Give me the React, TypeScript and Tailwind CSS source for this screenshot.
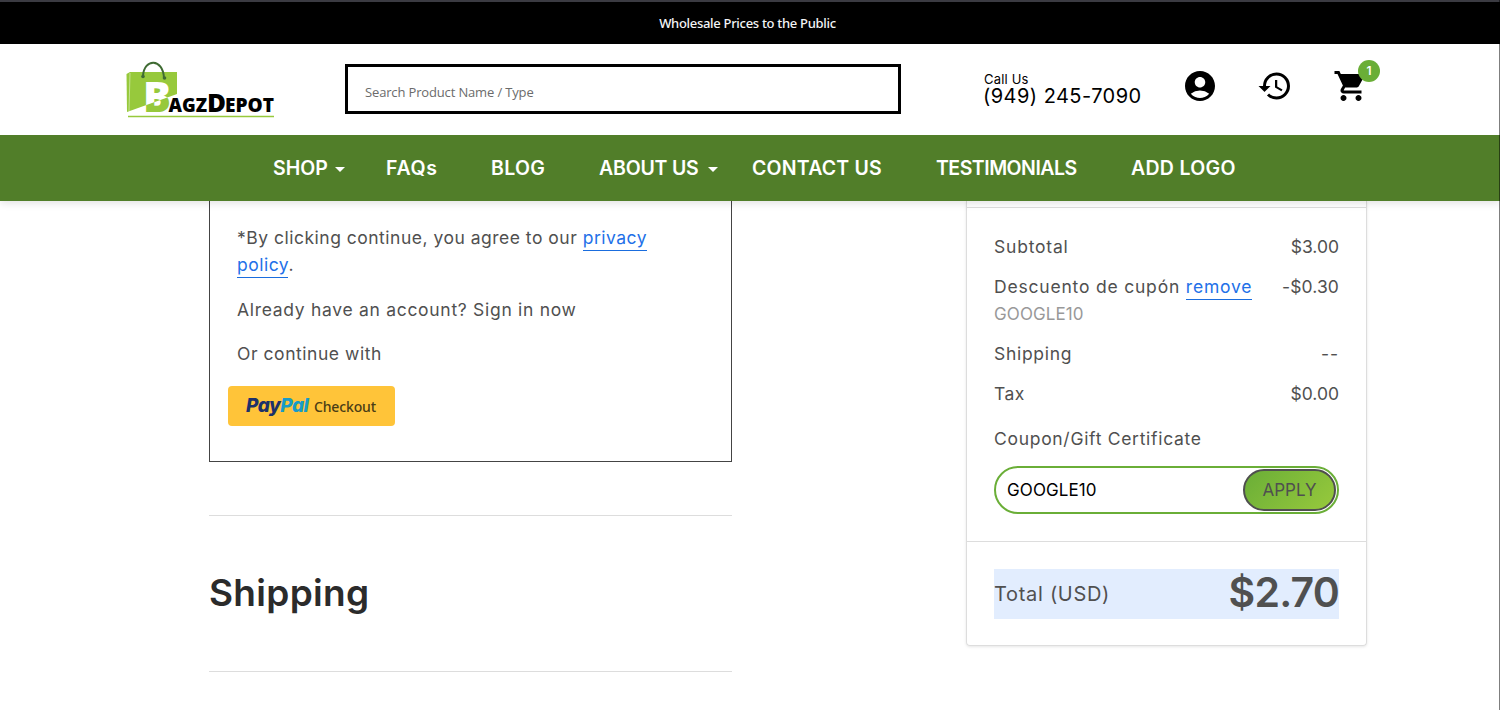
import React, { useState } from 'react';
import { MdAccountCircle, MdHistory, MdShoppingCart } from 'react-icons/md';

const Logo: React.FC = () => (
  <svg width="150" height="58" viewBox="0 0 150 58" className="overflow-visible font-['Open_Sans'] font-extrabold" aria-label="BagzDepot">
    <defs>
      <clipPath id="bag">
        <path d="M1 13 4 11H51V33L1 51Z" />
      </clipPath>
    </defs>
    <text x="17" y="51" fontSize="42" fill="#97c93c" textLength="28" lengthAdjust="spacingAndGlyphs">B</text>
    <path d="M0.500 13 4 11H51V33L1 51Z" fill="#97c93c" />
    <path d="M4 12 3 50" stroke="#c5e391" strokeWidth="1" />
    <text x="17" y="51" fontSize="42" fill="#fff" textLength="28" lengthAdjust="spacingAndGlyphs" clipPath="url(#bag)">B</text>
    <path d="M17 15C18 -3 37 -3 38 17" fill="none" stroke="#3f6b33" strokeWidth="2" />
    <circle cx="17" cy="15.500" r="1.800" fill="#3f6b33" />
    <circle cx="38.500" cy="17" r="1.800" fill="#3f6b33" />
    <text x="42.500" y="50.500" fontSize="18.500" textLength="38.500" lengthAdjust="spacingAndGlyphs">AGZ</text>
    <text x="81" y="50.500" fontSize="24" textLength="19" lengthAdjust="spacingAndGlyphs">D</text>
    <text x="99" y="50.500" fontSize="18.500" textLength="49" lengthAdjust="spacingAndGlyphs">EPOT</text>
    <path d="M2 55.500H148" stroke="#97c93c" strokeWidth="1.500" />
  </svg>
);

const Caret = ({ className = 'ml-[7px]' }: { className?: string }) => (
  <span className={`${className} mt-px border-x-[5px] border-t-[5px] border-x-transparent border-t-white`} />
);

const Header: React.FC = () => (
  <header className="relative z-10 shadow-[0_2px_8px_rgba(0,0,0,0.12)]">
    <div className="flex h-11 items-center justify-center border-t-2 border-[#3b3b42] bg-black pr-[5px] pt-0.5 font-['Noto_Sans'] text-[13px] font-medium tracking-[-0.3px] text-gray-100">
      Wholesale Prices to the Public
    </div>
    <div className="flex h-[91px] items-start bg-white pl-[126px] text-black">
      <div className="mt-[17px] w-[219px]">
        <Logo />
      </div>
      <input
        placeholder="Search Product Name / Type"
        className="mt-5 h-[50px] w-[556px] border-[3px] border-black px-[17px] pt-[6px] font-['Open_Sans'] text-[13px] tracking-[-0.15px] placeholder:text-[#6b6b6b]"
      />
      <div className="ml-[83px] mt-[27px] w-[195px] whitespace-nowrap">
        <div className="text-[13px] leading-[17px] tracking-[0.2px]">Call Us</div>
        <div className="-ml-px text-[20px] leading-[17px] tracking-[0.45px]">(949) 245-7090</div>
      </div>
      <MdAccountCircle className="ml-[3px] mt-6 size-9 shrink-0" />
      <MdHistory className="ml-[39px] mt-6 size-9 shrink-0" />
      <div className="relative ml-[40px] mt-6 shrink-0">
        <MdShoppingCart className="size-9" />
        <span className="absolute -top-2 left-[25px] flex size-[22px] items-center justify-center rounded-full bg-[#6aae37] text-[12px] font-semibold text-white">
          1
        </span>
      </div>
    </div>
    <nav className="flex h-[66px] items-center whitespace-nowrap bg-[#517e29] pl-[273px] pt-0.5 text-[19.5px] font-semibold text-white">
      <a className="flex w-[113px] items-center">SHOP<Caret /></a>
      <a className="w-[105px] tracking-[0.7px]">FAQs</a>
      <a className="w-[108px] tracking-[0.3px]">BLOG</a>
      <a className="flex w-[153px] items-center tracking-[-0.2px]">ABOUT US<Caret className="ml-[9px]" /></a>
      <a className="w-[184px] tracking-[0.2px]">CONTACT US</a>
      <a className="w-[195px] tracking-[-0.5px]">TESTIMONIALS</a>
      <a className="tracking-[0.3px]">ADD LOGO</a>
    </nav>
  </header>
);

const CustomerStep: React.FC = () => (
  <section className="h-[261px] border border-t-0 border-[#444] pl-[27px] pt-[23px] text-[17.5px] leading-[27px] tracking-[0.55px]">
    <p className="tracking-[0.5px]">
      *By clicking continue, you agree to our{' '}
      <a className="border-b border-[#1a6dde] pb-0.5 text-[#2270e8]">privacy</a>
      <br />
      <a className="border-b border-[#1a6dde] pb-0.5 text-[#2270e8]">policy</a>.
    </p>
    <p className="mt-[18px] tracking-[0.7px]">Already have an account? Sign in now</p>
    <p className="mt-[17px]">Or continue with</p>
    <button className="-ml-[9px] mt-[19px] flex h-10 w-[167px] items-center rounded bg-[#ffc439] pl-[18px]">
      <span className="w-[68px] pb-0.5 text-left text-[19px] font-extrabold italic tracking-[-0.5px] text-[#1d3169]">
        Pay<span className="text-[#189bc7]">Pal</span>
      </span>
      <span className="font-['Noto_Sans'] text-[14px] font-medium tracking-[-0.15px] text-[#4a3d16]">Checkout</span>
    </button>
  </section>
);

const OrderSummary: React.FC = () => {
  const [coupon, setCoupon] = useState('GOOGLE10');

  return (
    <aside className="h-[445px] w-[401px] rounded-b border border-t-0 border-[#ddd] text-[17.5px] leading-[27px] shadow-[0_1px_3px_rgba(0,0,0,0.1)]">
      <div className="h-[7px] border-b border-[#ddd]" />
      <div className="h-[334px] border-b border-[#ddd] px-[27px] pt-[25px]">
        <div className="flex justify-between">
          <span className="tracking-[0.8px]">Subtotal</span>
          <span>$3.00</span>
        </div>
        <div className="mt-[13px] flex justify-between">
          <span className="tracking-[0.8px]">
            Descuento de cupón <a className="border-b border-[#1a6dde] pb-0.5 text-[#2270e8]">remove</a>
          </span>
          <span className="tracking-[0.1px]">-$0.30</span>
        </div>
        <div className="mt-px text-[17px] tracking-[0.1px] text-[#999]">GOOGLE10</div>
        <div className="mt-3 flex justify-between">
          <span className="tracking-[0.7px]">Shipping</span>
          <span className="tracking-[1px]">--</span>
        </div>
        <div className="mt-[13px] flex justify-between">
          <span className="tracking-[0.4px]">Tax</span>
          <span>$0.00</span>
        </div>
        <div className="mt-[18px] tracking-[0.7px]">Coupon/Gift Certificate</div>
        <div className="mt-[14px] flex h-12 items-center rounded-full border-2 border-[#6aae37] pl-[11px] pr-px">
          <input
            value={coupon}
            onChange={(e) => setCoupon(e.target.value)}
            className="min-w-0 flex-1 text-[17px] tracking-[0.1px] text-black outline-none"
          />
          <button className="h-[42px] w-[93px] rounded-full border-2 border-[#4f4f4f] bg-linear-135 from-[#6aae37] to-[#97c93c] text-[17px] text-[#4f4f4f]">
            APPLY
          </button>
        </div>
      </div>
      <div className="px-[27px] pt-[27px]">
        <div className="flex h-[50px] items-center justify-between bg-[#e2edfe]">
          <span className="text-[20px] tracking-[0.7px]">Total (USD)</span>
          <span className="-mt-[3px] text-[41px] font-semibold tracking-[-0.8px]">$2.70</span>
        </div>
      </div>
    </aside>
  );
};

const App: React.FC = () => {
  return (
    <div className="relative h-[710px] w-[1500px] overflow-hidden bg-white font-[Inter,sans-serif] text-[#505050]">
      <Header />
      <main className="flex items-start gap-[234px] pl-[209px]">
        <div className="w-[523px]">
          <CustomerStep />
          <section className="mt-[53px] flex h-[157px] items-center border-y border-[#ddd]">
            <h2 className="-mt-[2px] text-[37px] font-semibold tracking-[0.3px] text-[#2b2b2b]">Shipping</h2>
          </section>
        </div>
        <OrderSummary />
      </main>
      <div className="absolute inset-y-0 right-0 z-20 w-px bg-black/50" />
    </div>
  );
};

export default App;
